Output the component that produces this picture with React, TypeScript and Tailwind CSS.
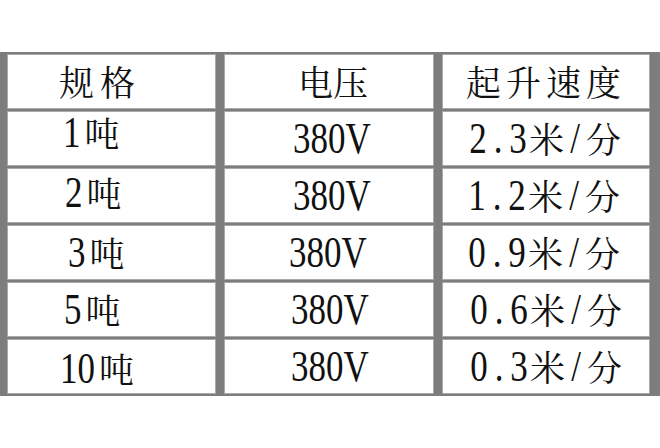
import React from "react";

type Row = {
  spec: string;
  volt: string;
  speed: string;
  c1: string;
  c2: string;
  c3: string;
};

// padding per cell is literal so tailwind picks it up
const ROWS: Row[] = [
  { spec: "1吨", volt: "380V", speed: "2.3米/分", c1: "pl-[55px] pb-[12px]", c2: "pl-[68px]", c3: "pl-[25px]" },
  { spec: "2吨", volt: "380V", speed: "1.2米/分", c1: "pl-[57px] pb-[6px]", c2: "pl-[68px]", c3: "pl-[24px]" },
  { spec: "3吨", volt: "380V", speed: "0.9米/分", c1: "pl-[60px]", c2: "pl-[64px]", c3: "pl-[24px]" },
  { spec: "5吨", volt: "380V", speed: "0.6米/分", c1: "pl-[56px]", c2: "pl-[66px]", c3: "pl-[26px]" },
  { spec: "10吨", volt: "380V", speed: "0.3米/分", c1: "pl-[52px] pt-[4px]", c2: "pl-[66px]", c3: "pl-[26px]" },
];

const isAscii = (ch: string) => ch.charCodeAt(0) < 128;

function Mixed({ text }: { text: string }) {
  return (
    <span className="inline-flex items-center whitespace-nowrap">
      {Array.from(text).map((ch, i) =>
        isAscii(ch) ? (
          <span key={i} className="inline-block font-['Liberation_Serif',serif] text-[35px] leading-none scale-y-[1.27]">
            {ch}
          </span>
        ) : (
          <span key={i} className="ml-[4px] inline-block font-['Noto_Serif_CJK_SC','Noto_Sans_CJK_SC',serif] text-[35px] leading-none">
            {ch}
          </span>
        ),
      )}
    </span>
  );
}

// speed column: SimSun-like fixed slots
function Slots({ text }: { text: string }) {
  return (
    <span className="inline-flex items-center whitespace-nowrap">
      {Array.from(text).map((ch, i) =>
        isAscii(ch) ? (
          <span key={i} className="inline-block w-[20px] text-center font-['Liberation_Serif',serif] text-[35px] leading-none scale-y-[1.27]">
            {ch}
          </span>
        ) : (
          <span key={i} className="inline-block w-[37px] text-center font-['Noto_Serif_CJK_SC','Noto_Sans_CJK_SC',serif] text-[35px] leading-none">
            {ch}
          </span>
        ),
      )}
    </span>
  );
}

const cell = "flex h-[55px] items-center border border-[#a9a9a9] bg-white text-[#111]";
const head = "font-['Noto_Serif_CJK_SC','Noto_Sans_CJK_SC',serif] text-[35px] leading-none whitespace-nowrap";

export default function App() {
  return (
    <div className="h-[448px] w-[660px] overflow-hidden bg-white pt-[52px]">
      <div className="grid w-[660px] grid-cols-[209px_210px_208px] gap-x-[8px] gap-y-[2px] bg-[#7d7d7d] pb-[2px] pl-[7px] pr-[10px] pt-[2px]">
        <div className={`${cell} pl-[51px]`}>
          <span className={`${head} tracking-[6px]`}>规格</span>
        </div>
        <div className={`${cell} pl-[73px]`}>
          <span className={head}>电压</span>
        </div>
        <div className={`${cell} pl-[23px]`}>
          <span className={`${head} tracking-[5px]`}>起升速度</span>
        </div>

        {ROWS.map((r) => (
          <React.Fragment key={r.spec}>
            <div className={`${cell} ${r.c1}`}>
              <Mixed text={r.spec} />
            </div>
            <div className={`${cell} ${r.c2}`}>
              <Mixed text={r.volt} />
            </div>
            <div className={`${cell} ${r.c3}`}>
              <Slots text={r.speed} />
            </div>
          </React.Fragment>
        ))}
      </div>
    </div>
  );
}
